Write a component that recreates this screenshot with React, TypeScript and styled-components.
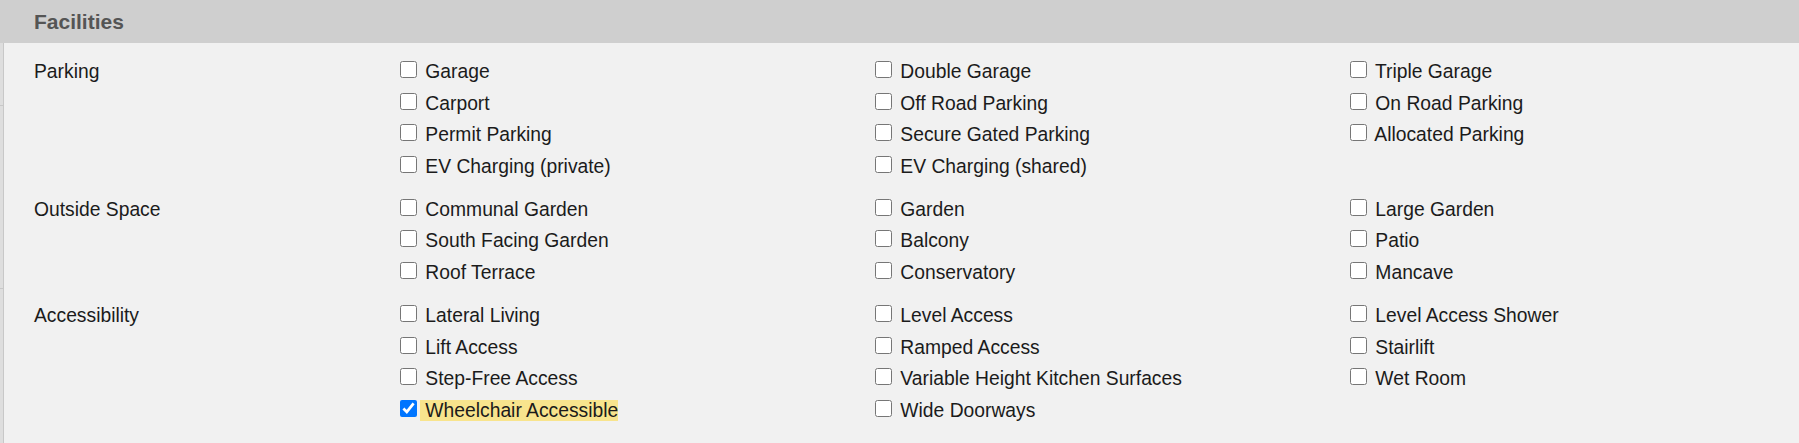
import React from 'react';
import styled, { createGlobalStyle } from 'styled-components';

const GlobalStyle = createGlobalStyle`
  html, body {
    margin: 0;
    padding: 0;
    background: #f1f1f1;
  }
  body {
    font-family: "Liberation Sans", Arial, sans-serif;
    color: #1b1b1b;
  }
`;

const Panel = styled.section`
  width: 1799px;
  height: 443px;
  overflow: hidden;
  display: flex;
  flex-direction: column;
  background: #f1f1f1;
`;

const Header = styled.header`
  height: 43px;
  flex-shrink: 0;
  background: #cfcfcf;
  display: flex;
  align-items: center;
  padding-left: 34px;
`;

const HeaderTitle = styled.h2`
  margin: 0;
  font-size: 21px;
  font-weight: 700;
  color: #555;
`;

const Main = styled.div`
  flex: 1;
  display: flex;
`;

const Gutter = styled.div`
  width: 3px;
  flex-shrink: 0;
  background: #dedede;
  border-right: 1px solid #c8c8c8;
  display: flex;
  flex-direction: column;
`;

const GutterCell = styled.div<{ $h: number }>`
  height: ${p => p.$h}px;
  border-bottom: 1px solid #c8c8c8;
`;

const Groups = styled.div`
  flex: 1;
  padding: 13px 0 0 30px;
  display: flex;
  flex-direction: column;
  gap: 11px;
`;

const Group = styled.div`
  display: grid;
  grid-template-columns: 366px 475px 475px 1fr;
`;

const GroupLabel = styled.div`
  font-size: 19.3px;
  line-height: 31.7px;
`;

const Column = styled.div`
  display: flex;
  flex-direction: column;
`;

const Option = styled.label`
  font-size: 19.3px;
  line-height: 31.7px;
  height: 31.7px;
  white-space: nowrap;
`;

const Box = styled.input`
  width: 17px;
  height: 17px;
  margin: 0 3px 0 0;
  vertical-align: baseline;
`;

const Caption = styled.span<{ $marked?: boolean }>`
  background: ${p => (p.$marked ? '#f8e48d' : 'transparent')};
`;

type Item = { name: string; checked?: boolean };

const groups: { label: string; columns: Item[][] }[] = [
  {
    label: 'Parking',
    columns: [
      [{ name: 'Garage' }, { name: 'Carport' }, { name: 'Permit Parking' }, { name: 'EV Charging (private)' }],
      [{ name: 'Double Garage' }, { name: 'Off Road Parking' }, { name: 'Secure Gated Parking' }, { name: 'EV Charging (shared)' }],
      [{ name: 'Triple Garage' }, { name: 'On Road Parking' }, { name: 'Allocated Parking' }],
    ],
  },
  {
    label: 'Outside Space',
    columns: [
      [{ name: 'Communal Garden' }, { name: 'South Facing Garden' }, { name: 'Roof Terrace' }],
      [{ name: 'Garden' }, { name: 'Balcony' }, { name: 'Conservatory' }],
      [{ name: 'Large Garden' }, { name: 'Patio' }, { name: 'Mancave' }],
    ],
  },
  {
    label: 'Accessibility',
    columns: [
      [{ name: 'Lateral Living' }, { name: 'Lift Access' }, { name: 'Step-Free Access' }, { name: 'Wheelchair Accessible', checked: true }],
      [{ name: 'Level Access' }, { name: 'Ramped Access' }, { name: 'Variable Height Kitchen Surfaces' }, { name: 'Wide Doorways' }],
      [{ name: 'Level Access Shower' }, { name: 'Stairlift' }, { name: 'Wet Room' }],
    ],
  },
];

export default function App() {
  return (
    <>
      <GlobalStyle />
      <Panel>
        <Header>
          <HeaderTitle>Facilities</HeaderTitle>
        </Header>
        <Main>
          <Gutter>
            <GutterCell $h={62} />
            <GutterCell $h={182} />
          </Gutter>
          <Groups>
            {groups.map(group => (
              <Group key={group.label}>
                <GroupLabel>{group.label}</GroupLabel>
                {group.columns.map((col, i) => (
                  <Column key={i}>
                    {col.map(item => (
                      <Option key={item.name}>
                        <Box type="checkbox" defaultChecked={item.checked} />
                        <Caption $marked={item.checked}>{' '}{item.name}</Caption>
                      </Option>
                    ))}
                  </Column>
                ))}
              </Group>
            ))}
          </Groups>
        </Main>
      </Panel>
    </>
  );
}
